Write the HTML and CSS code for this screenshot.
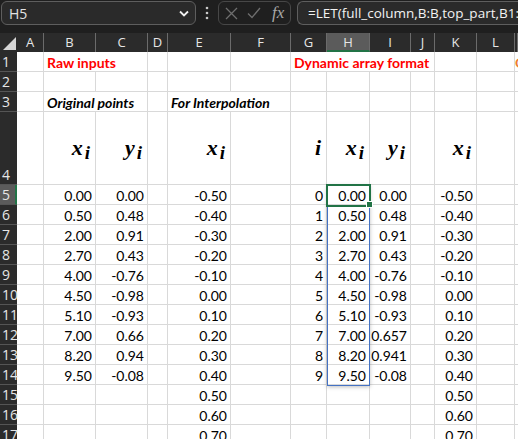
FILE: index.html
```html
<!DOCTYPE html>
<html lang="en">

<head>
	<title>LET spill - Excel</title>
	<link rel="stylesheet" href="styles.css">
	<script>
		function dw(s) { document.write(s); }

		var cols = ["A", "B", "C", "D", "E", "F", "G", "H", "I", "J", "K", "L", "M"];
		var xs = ["0.00", "0.50", "2.00", "2.70", "4.00", "4.50", "5.10", "7.00", "8.20", "9.50"];
		var ys = ["0.00", "0.48", "0.91", "0.43", "-0.76", "-0.98", "-0.93", "0.66", "0.94", "-0.08"];
		var ys2 = ["0.00", "0.48", "0.91", "0.43", "-0.76", "-0.98", "-0.93", "0.657", "0.941", "-0.08"];
		var es = ["-0.50", "-0.40", "-0.30", "-0.20", "-0.10", "0.00", "0.10", "0.20", "0.30",
			"0.40", "0.50", "0.60", "0.70"];

		function mx(v) { return v + '<span class=sub>i</span>'; }

		var data = {};
		data[1] = { B: ["Raw inputs", "red span2"], G: ["Dynamic array format", "red span4"], M: ["O", "orange"] };
		data[3] = { B: ["Original points", "bi span2"], E: ["For Interpolation", "bi span2"] };
		data[4] = { B: [mx("x"), "m"], C: [mx("y"), "m"], E: [mx("x"), "m"], G: ["i", "m"],
			H: [mx("x"), "m"], I: [mx("y"), "m"], K: [mx("x"), "m"] };
		for (var k = 0; k < 13; k++) {
			var r = {};
			if (k < 10) {
				r.B = [xs[k], "n"]; r.C = [ys[k], "n"]; r.G = [k, "n"]; r.H = [xs[k], "n"]; r.I = [ys2[k], "n"];
			}
			r.E = [es[k], "n"]; r.K = [es[k], "n"];
			data[k + 5] = r;
		}

		// writes the header row and all 17 visible rows into the grid
		function drawSheet() {
			dw('<div class="ch corner"><svg width="13" height="13" viewBox="0 0 13 13"><path d="M13 0V13H0Z" fill="#d6d6d6"/></svg></div>');
			for (var i = 0; i < cols.length; i++) {
				// M is scrolled almost out of view, only its left edge shows
				var label = cols[i] == "M" ? "" : cols[i];
				dw('<div class="ch' + (cols[i] == "H" ? " sel" : "") + '">' + label + '</div>');
			}
			for (var row = 1; row <= 17; row++) {
				dw('<div class="rh' + (row == 5 ? " sel" : "") + '">' + row + '</div>');
				var d = data[row] || {};
				for (var i = 0; i < cols.length; i++) {
					var cell = d[cols[i]];
					if (!cell) { dw('<div class="c"></div>'); continue; }
					dw('<div class="c ' + cell[1] + '">' + cell[0] + '</div>');
					if (cell[1].indexOf("span2") >= 0) i += 1;
					if (cell[1].indexOf("span4") >= 0) i += 3;
				}
			}
		}
	</script>
</head>

<body>
	<div class="fbar">
		<div class="namebox">
			<span>H5</span>
			<svg width="10" height="7" viewBox="0 0 10 7"><path d="M1 1.5L5 5.5L9 1.5" fill="none" stroke="#f0f0f0" stroke-width="1.8"/></svg>
		</div>
		<div class="dots">
			<svg width="4" height="14" viewBox="0 0 4 14"><circle cx="2" cy="2" r="1.3" fill="#c8c8c8"/><circle cx="2" cy="7" r="1.3" fill="#c8c8c8"/><circle cx="2" cy="12" r="1.3" fill="#c8c8c8"/></svg>
		</div>
		<div class="fbtns">
			<svg width="13" height="13" viewBox="0 0 13 13"><path d="M1 1L12 12M12 1L1 12" stroke="#6e6e6e" stroke-width="1.3"/></svg>
			<svg width="14" height="12" viewBox="0 0 14 12"><path d="M1 6.5L5 10.5L13 1" fill="none" stroke="#6e6e6e" stroke-width="1.3"/></svg>
			<span class="fx">fx</span>
		</div>
		<div class="formula">=LET(full_column,B:B,top_part,B1:</div>
	</div>

	<div class="sheet">
		<script>drawSheet();</script>
		<div class="spill"></div>
		<div class="selbox"></div>
		<div class="handle"></div>
	</div>
</body>

</html>
```

FILE: styles.css
```css
body {
	margin: 0;
	background-color: #fff;
	overflow: hidden;
	font-family: Lato, "Open Sans", sans-serif;
}

/* formula bar */
.fbar {
	display: flex;
	height: 33px;
	padding: 1px 0 0 1px;
	box-sizing: border-box;
	background-color: #1f1f1f;
	font-family: "Open Sans", sans-serif;
}

.namebox {
	width: 195px;
	height: 24px;
	box-sizing: border-box;
	display: flex;
	align-items: center;
	justify-content: space-between;
	padding: 0 6px 0 7px;
	border: 1px solid #5e5e5e;
	border-radius: 6px;
	background-color: #2a2a2a;
	color: #e2e2e2;
	font-size: 14px;
}

.dots {
	width: 22px;
	height: 24px;
	display: flex;
	align-items: center;
	justify-content: center;
}

.fbtns {
	width: 73px;
	height: 24px;
	box-sizing: border-box;
	display: flex;
	align-items: center;
	gap: 9px;
	padding-left: 6px;
	border: 1px solid #474747;
	border-radius: 6px;
}

.fx {
	color: #a8a8a8;
	font: italic 17px "Liberation Serif", serif;
	margin-left: 2px;
}

.formula {
	flex: 1;
	height: 24px;
	box-sizing: border-box;
	margin-left: 6px;
	padding-left: 10px;
	border: 1px solid #5e5e5e;
	border-right: none;
	border-radius: 6px 0 0 6px;
	background-color: #2a2a2a;
	color: #f2f2f2;
	font-size: 13.5px;
	line-height: 22px;
	white-space: nowrap;
	overflow: hidden;
}

/* grid */
.sheet {
	position: relative;
	display: grid;
	grid-template-columns: 17px 27px 52px 52px 20px 63px 60px 36px 43px 41px 24px 42px 38px 3px;
	grid-template-rows: 19px 20px 20px 20px 73px;
	grid-auto-rows: 20px;
}

.ch {
	background-color: #2b2b2b;
	border-right: 1px solid #6b6b6b;
	color: #e6e6e6;
	font-family: "Open Sans", sans-serif;
	font-size: 13px;
	line-height: 19px;
	text-align: center;
	box-sizing: border-box;
}

.ch.corner {
	border-right: none;
	display: flex;
	align-items: flex-end;
	justify-content: flex-end;
	padding: 0 1px 2px 0;
}

.ch.sel {
	background-color: #5b5b5b;
	border-bottom: 2px solid #217346;
}

.rh {
	display: flex;
	align-items: flex-end;
	padding-left: 2px;
	background-color: #2b2b2b;
	border-bottom: 1px solid #555;
	color: #e6e6e6;
	font-family: "Open Sans", sans-serif;
	font-size: 14px;
	line-height: 19px;
	box-sizing: border-box;
}

.rh.sel {
	background-color: #5b5b5b;
	border-right: 2px solid #217346;
}

.c {
	display: flex;
	align-items: flex-end;
	padding: 0 3px;
	border-right: 1px solid #d9d9d9;
	border-bottom: 1px solid #d9d9d9;
	box-sizing: border-box;
	color: #000;
	font-size: 14px;
	line-height: 17px;
	white-space: nowrap;
	overflow: hidden;
}

.n {
	justify-content: flex-end;
}

.span2 {
	grid-column: span 2;
}

.span4 {
	grid-column: span 4;
}

.red {
	color: #ff0000;
	font-weight: bold;
}

.orange {
	color: #ed7d31;
	font-weight: bold;
	padding: 0;
	border-right: none;
}

.bi {
	font-weight: bold;
	font-style: italic;
}

.m {
	align-items: center;
	justify-content: flex-end;
	padding-right: 5px;
	font: bold italic 22px "Liberation Serif", serif;
	line-height: 22px;
	overflow: visible;
}

.sub {
	position: relative;
	top: 5px;
	margin-left: 2px;
	font-size: 19px;
}

/* selection and spill range */
.spill {
	position: absolute;
	left: 327px;
	top: 152px;
	width: 43px;
	height: 201px;
	box-sizing: border-box;
	border: 1px solid #4472c4;
	box-shadow: 0 1px 4px rgba(0, 0, 0, 0.25);
}

.selbox {
	position: absolute;
	left: 326px;
	top: 151px;
	width: 45px;
	height: 23px;
	box-sizing: border-box;
	border: 2px solid #217346;
}

.handle {
	position: absolute;
	left: 367px;
	top: 169px;
	width: 5px;
	height: 5px;
	background-color: #217346;
	outline: 1px solid #fff;
}
```
